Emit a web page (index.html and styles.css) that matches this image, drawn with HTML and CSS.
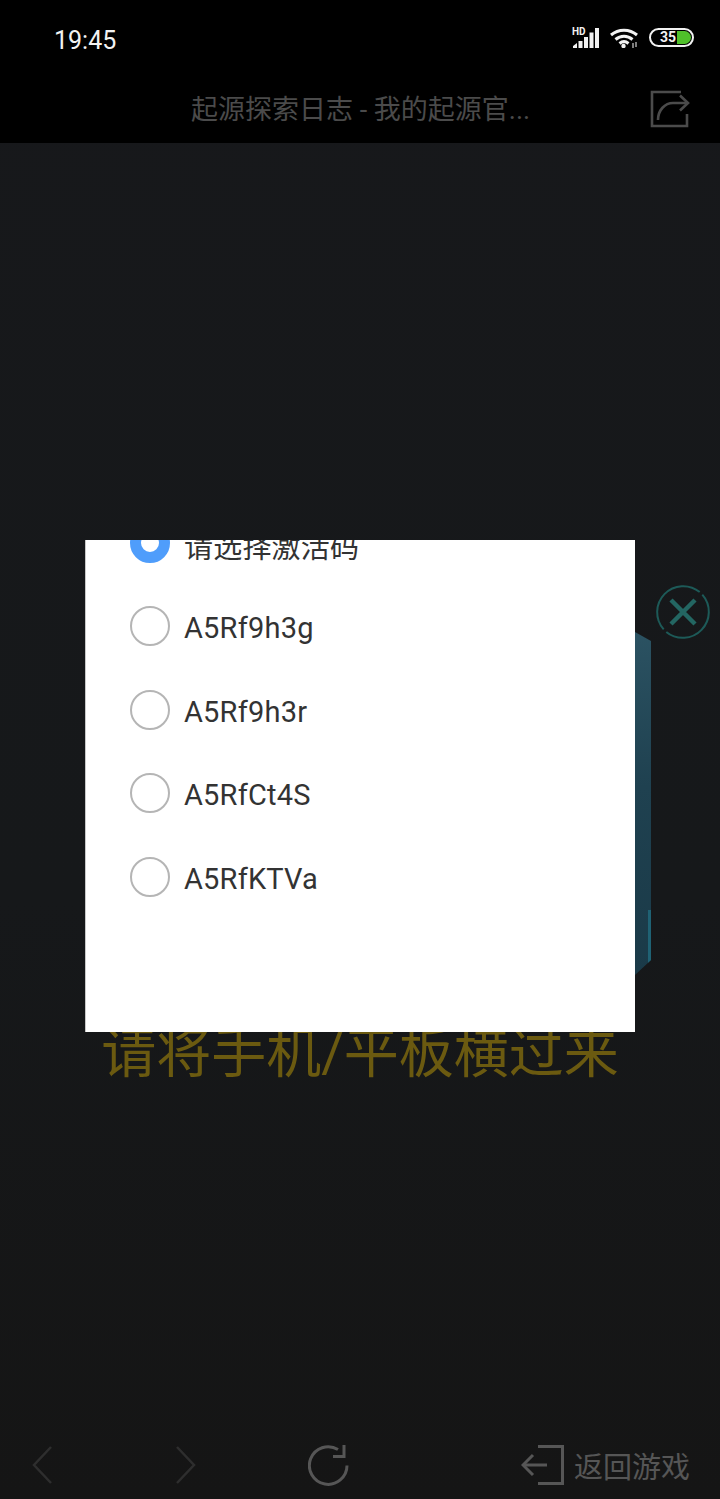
FILE: index.html
```html
<!DOCTYPE html>
<html lang="zh-CN">
<head>
  <meta charset="UTF-8">
  <title>起源探索日志</title>
  <link rel="stylesheet" href="styles.css">
</head>
<body>
  <div class="page">
    <header class="top">
      <div class="status">
        <span class="time">19:45</span>
        <div class="status-icons">
          <div class="signal">
            <span class="hd">HD</span>
            <svg width="28" height="20" viewBox="0 0 28 20">
              <path d="M1 20v-2l4-3v5zM6.500 20v-7h4v7zM12 20V9h4v11zM17.500 20V4.500h4V20zM23 20V0h4v20z" fill="#f2f2f2"/>
            </svg>
          </div>
          <svg class="wifi" width="28" height="20" viewBox="0 0 28 20">
            <g fill="none" stroke="#f2f2f2" stroke-width="3">
              <path d="M1 7c7.500-6.500 18.500-6.500 26 0"/>
              <path d="M5.500 11.500c5-4.300 12-4.300 17 0"/>
              <path d="M9.500 15.500c2.700-2.200 6.300-2.200 9 0"/>
            </g>
            <circle cx="13.500" cy="18" r="2.200" fill="#f2f2f2"/>
            <path d="M23 15v5M26 14v5" stroke="#cfcfcf" stroke-width="1.200"/>
          </svg>
          <div class="battery">
            <span class="battery-fill"></span>
            <span class="battery-num">35</span>
          </div>
        </div>
      </div>
      <div class="titlebar">
        <span class="title">起源探索日志 - 我的起源官...</span>
        <svg class="share" width="40" height="38" viewBox="0 0 40 38">
          <g fill="none" stroke="#4b4b4b" stroke-width="2.600">
            <path d="M31 2H2v34h35V24"/>
            <path d="M8 30c0-10 7-17 15-17h15"/>
            <path d="M30 5.500l8 7.500-8 7.500"/>
          </g>
        </svg>
      </div>
    </header>

    <main class="stage">
      <div class="game-panel"></div>
      <p class="rotate-hint">请将手机/平板横过来</p>

      <svg class="game-close" width="56" height="56" viewBox="0 0 56 56">
        <g fill="none" stroke="#1d5a58" stroke-width="2">
          <path d="M47.300 10.600A26 26 0 0 1 11.300 47.900"/>
          <path d="M8.700 45.400A26 26 0 0 1 44.700 8.100"/>
        </g>
        <path d="M16 16l24 24M40 16L16 40" stroke="#236662" stroke-width="4.500"/>
      </svg>

      <div class="dialog">
        <ul class="options">
          <li class="option"><span class="radio checked"></span><span class="label">请选择激活码</span></li>
          <li class="option"><span class="radio"></span><span class="label">A5Rf9h3g</span></li>
          <li class="option"><span class="radio"></span><span class="label">A5Rf9h3r</span></li>
          <li class="option"><span class="radio"></span><span class="label">A5RfCt4S</span></li>
          <li class="option"><span class="radio"></span><span class="label">A5RfKTVa</span></li>
        </ul>
      </div>
    </main>

    <footer class="nav">
      <svg class="chevron" width="20" height="38" viewBox="0 0 20 38">
        <path d="M19 1L2 19l17 18" fill="none" stroke="#2e2e2e" stroke-width="2.500"/>
      </svg>
      <svg class="chevron next" width="20" height="38" viewBox="0 0 20 38">
        <path d="M1 1l17 18L1 37" fill="none" stroke="#2e2e2e" stroke-width="2.500"/>
      </svg>
      <svg class="reload" width="42" height="42" viewBox="0 0 42 42">
        <path d="M39 21.500A18.800 18.800 0 1 1 30 5.500" fill="none" stroke="#565656" stroke-width="3"/>
        <path d="M36 1v11.500H25" fill="none" stroke="#565656" stroke-width="3"/>
      </svg>
      <div class="back-game">
        <svg width="43" height="40" viewBox="0 0 43 40">
          <g fill="none" stroke="#565656" stroke-width="3">
            <path d="M17 1.500h24.500v37H17"/>
            <path d="M2 20h24"/>
            <path d="M12 10L2 20l10 10"/>
          </g>
        </svg>
        <span>返回游戏</span>
      </div>
    </footer>
  </div>
</body>
</html>
```

FILE: styles.css
```css
html, body {
  margin: 0;
  padding: 0;
  background: #16181a;
}

.page {
  display: flex;
  flex-direction: column;
  width: 720px;
  height: 1499px;
  overflow: hidden;
  font-family: Roboto, "Noto Sans CJK SC", sans-serif;
  background: linear-gradient(180deg, #17181b 0%, #16181a 60%, #151515 100%);
}

.top {
  height: 143px;
  background: #000;
  flex-shrink: 0;
}

.status {
  display: flex;
  justify-content: space-between;
  align-items: flex-start;
  height: 80px;
  padding: 28px 26px 0 54px;
  box-sizing: border-box;
}

.time {
  margin-top: 1px;
  font-size: 25px;
  line-height: 24px;
  color: #f2f2f2;
}

.status-icons {
  display: flex;
  gap: 10px;
  align-items: flex-start;
}

.signal {
  position: relative;
  width: 28px;
  height: 20px;
}

.signal svg {
  display: block;
}

.hd {
  position: absolute;
  left: 0;
  top: -1px;
  font-size: 10px;
  line-height: 10px;
  font-weight: 700;
  color: #f2f2f2;
}

.battery {
  position: relative;
  width: 45px;
  height: 19px;
  margin-left: 1px;
  border: 2px solid #f2f2f2;
  border-radius: 10px;
  box-sizing: border-box;
  overflow: hidden;
}

.battery-fill {
  position: absolute;
  right: 1px;
  top: 1px;
  bottom: 1px;
  width: 14px;
  border-radius: 0 7px 7px 0;
  background: #4fc02a;
}

.battery-num {
  position: absolute;
  left: 9px;
  top: 0;
  font-size: 14px;
  line-height: 15px;
  font-weight: 700;
  color: #f2f2f2;
}

.titlebar {
  display: flex;
  align-items: flex-start;
  height: 63px;
  padding: 0 30px 0 191px;
}

.title {
  margin-top: 13px;
  font-size: 27px;
  line-height: 34px;
  color: #4b4b4b;
  white-space: nowrap;
}

.share {
  margin: 10px 0 0 auto;
}

.stage {
  position: relative;
  flex: 1;
  display: flex;
  flex-direction: column;
}

.game-panel {
  position: relative;
  width: 551px;
  height: 343px;
  margin: 489px 0 0 100px;
  background: linear-gradient(180deg, #2b5262 0%, #1f4150 45%, #1a3a48 100%);
  clip-path: polygon(0 0, calc(100% - 16px) 0, 100% 9px, 100% calc(100% - 15px), calc(100% - 16px) 100%, 0 100%);
}

.game-panel::after {
  content: "";
  position: absolute;
  right: 0;
  top: 278px;
  bottom: 0;
  width: 3px;
  background: #1f6274;
}

.rotate-hint {
  margin: 44px 0 0;
  text-align: center;
  font-size: 55px;
  line-height: 68px;
  color: #6b5a10;
}

.game-close {
  position: absolute;
  left: 655px;
  top: 441px;
}

.dialog {
  position: absolute;
  left: 85px;
  top: 397px;
  width: 550px;
  height: 492px;
  overflow: hidden;
  background: #fff;
  border-left: 1px solid #c8c8c8;
  box-sizing: border-box;
}

.options {
  list-style: none;
  margin: -39px 0 0;
  padding: 0 0 0 44px;
}

.option {
  display: flex;
  align-items: center;
  gap: 14px;
  height: 83.500px;
  font-size: 29px;
  letter-spacing: 0.2px;
  color: #333;
}

.label {
  margin-top: 4px;
}

.radio {
  width: 40px;
  height: 40px;
  border: 2px solid #b5b5b5;
  border-radius: 50%;
  box-sizing: border-box;
  flex-shrink: 0;
}

.radio.checked {
  border: 11px solid #4f9dfb;
}

.nav {
  display: flex;
  align-items: center;
  height: 69px;
  padding: 0 30px 0 32px;
  flex-shrink: 0;
}

.chevron.next {
  margin-left: 124px;
}

.reload {
  margin-left: 112px;
}

.back-game {
  display: flex;
  align-items: center;
  gap: 10px;
  margin-left: auto;
  font-size: 29px;
  color: #565656;
}
```
